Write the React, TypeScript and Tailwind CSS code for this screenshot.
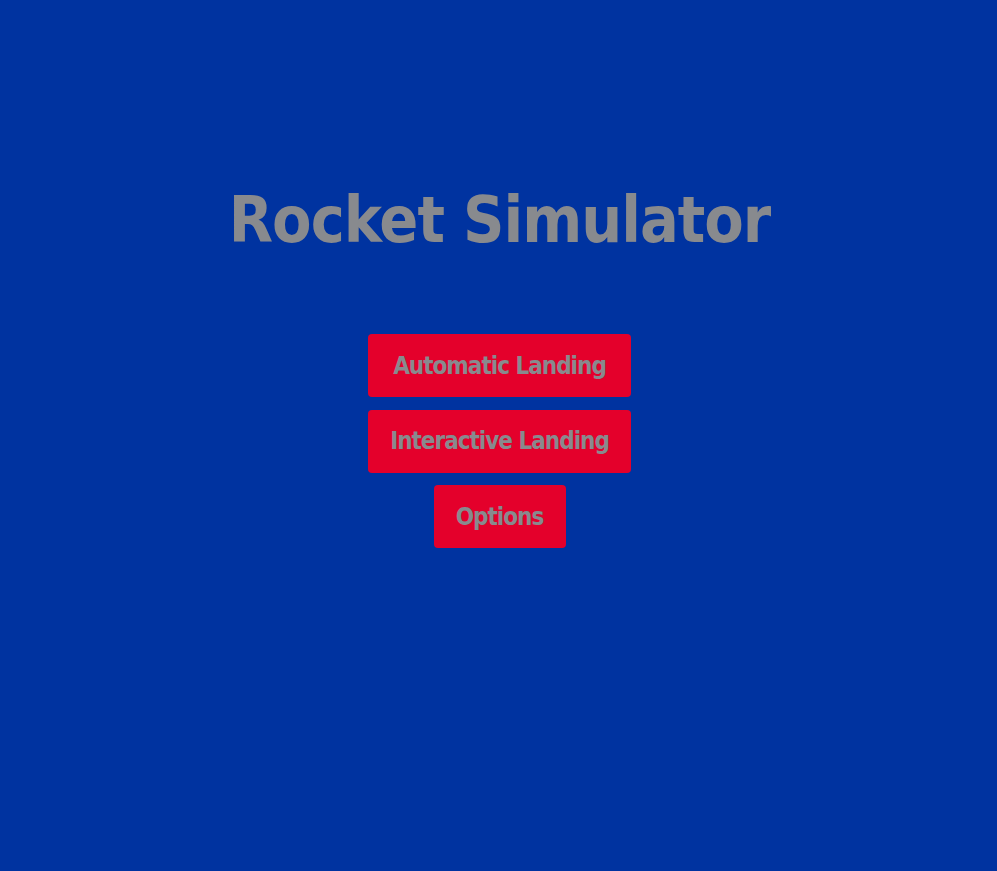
export default function App() {
  const font = { fontFamily: '"DejaVu Sans Condensed", "DejaVu Sans", sans-serif' };
  return (
    <div className="min-h-[871px] w-full bg-[#0033a0] flex flex-col items-center" style={font}>
      <h1 className="mt-[180px] ml-[2px] text-[64px] font-bold leading-[80px] tracking-[-1px] text-[#888a8e]">Rocket Simulator</h1>
      <div className="mt-[74px] ml-[2px] flex flex-col items-center gap-[12.5px]">
        <button className="w-[263px] h-[63px] rounded-[4px] bg-[#e4002b] text-[24px] font-bold tracking-[-1px] text-[#888a8e]">Automatic Landing</button>
        <button className="w-[263px] h-[63px] rounded-[4px] bg-[#e4002b] text-[24px] font-bold tracking-[-1px] text-[#888a8e]">Interactive Landing</button>
        <button className="w-[132px] h-[63px] rounded-[4px] bg-[#e4002b] text-[24px] font-bold tracking-[-1px] text-[#888a8e]">Options</button>
      </div>
    </div>
  );
}
